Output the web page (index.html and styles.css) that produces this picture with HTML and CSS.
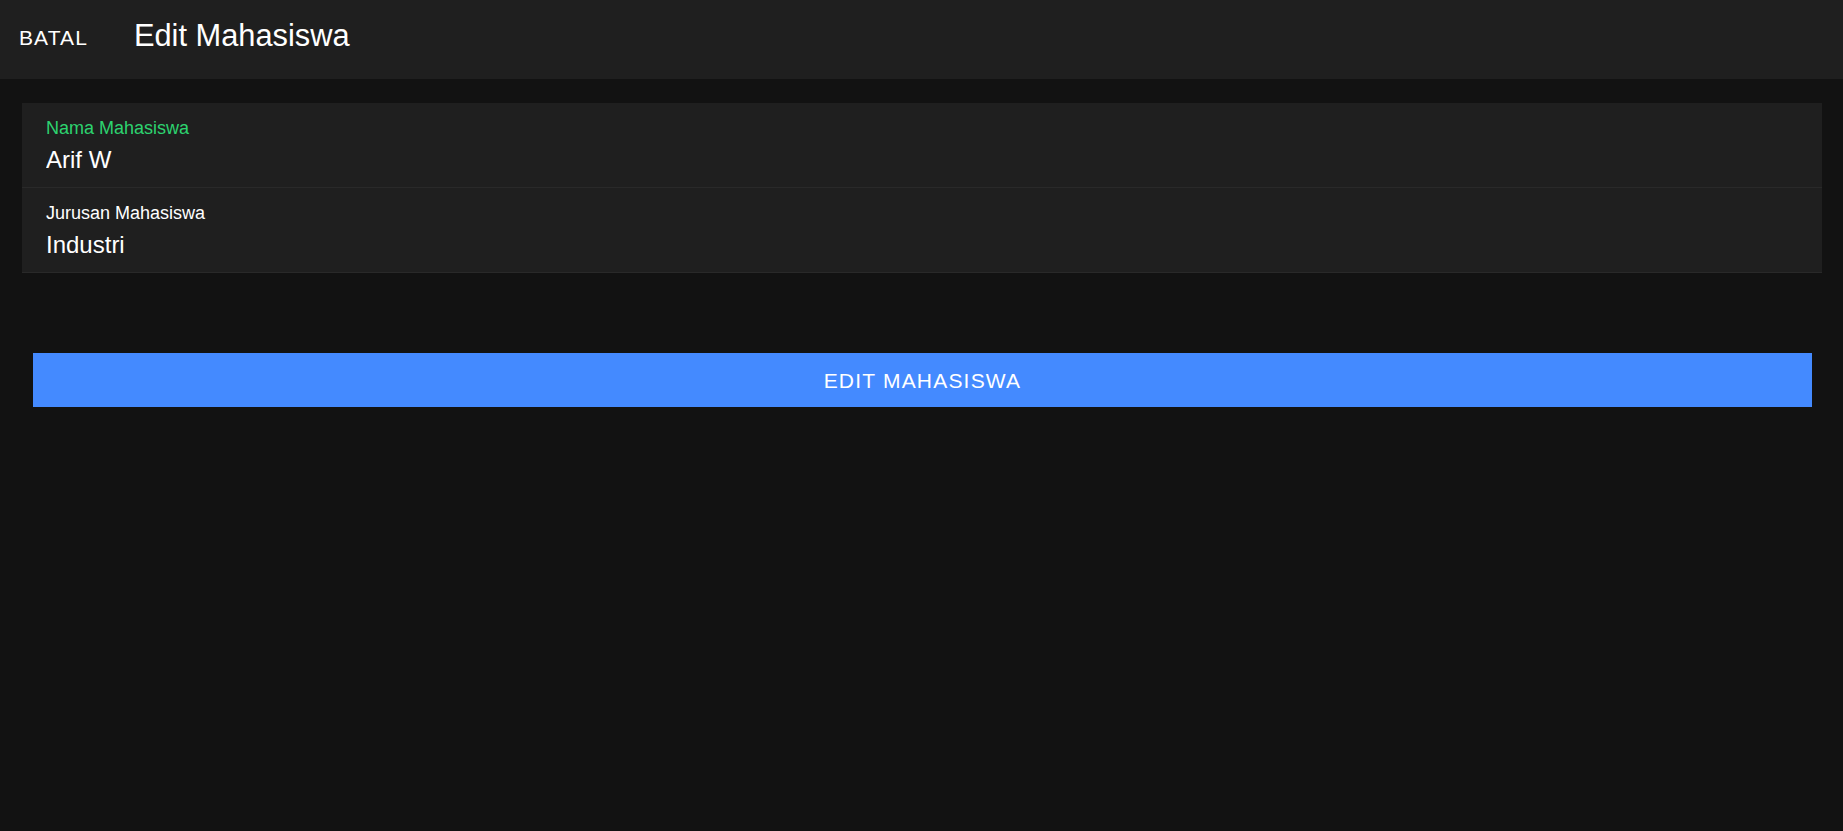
FILE: index.html
```html
<!DOCTYPE html>
<html lang="id">
<head>
<meta charset="utf-8">
<title>Edit Mahasiswa</title>
<link rel="stylesheet" href="styles.css">
</head>
<body>
<header class="toolbar">
  <button class="toolbar-btn" type="button">BATAL</button>
  <h1 class="toolbar-title">Edit Mahasiswa</h1>
</header>
<main class="content">
  <div class="list">
    <label class="item">
      <span class="item-label item-label--focused">Nama Mahasiswa</span>
      <input class="item-input" type="text" value="Arif W">
    </label>
    <label class="item">
      <span class="item-label">Jurusan Mahasiswa</span>
      <input class="item-input" type="text" value="Industri">
    </label>
  </div>
  <button class="submit-btn" type="button">EDIT MAHASISWA</button>
</main>
</body>
</html>
```

FILE: styles.css
```css
* { box-sizing: border-box; }
html, body {
  margin: 0;
  padding: 0;
  background: #121212;
  color: #ffffff;
  font-family: "Liberation Sans", Arial, sans-serif;
  min-height: 100vh;
}
.toolbar {
  height: 79px;
  background: #1f1f1f;
  display: flex;
  align-items: flex-start;
  padding-left: 19px;
}
.toolbar-btn {
  margin: 26px 0 0 0;
  padding: 0;
  border: 0;
  background: transparent;
  color: #ffffff;
  font-family: inherit;
  font-size: 21px;
  line-height: 24px;
  letter-spacing: 1.1px;
  cursor: pointer;
}
.toolbar-title {
  margin: 18px 0 0 46px;
  font-size: 30.8px;
  line-height: 36px;
  font-weight: 400;
}
.content {
  padding: 24px 21px 0 22px;
}
.list {
  background: #1f1f1f;
}
.item {
  display: flex;
  flex-direction: column;
  padding: 14px 24px 13px;
  border-bottom: 1px solid #292929;
}
.item-label {
  font-size: 18px;
  line-height: 22px;
  color: #ffffff;
}
.item-label--focused {
  color: #2dd36f;
}
.item-input {
  margin-top: 7px;
  padding: 0;
  border: 0;
  outline: none;
  background: transparent;
  color: #ffffff;
  font-family: inherit;
  font-size: 24px;
  line-height: 28px;
  height: 28px;
}
.submit-btn {
  display: block;
  width: calc(100% - 21px);
  margin: 80px 0 0 11px;
  height: 54px;
  padding: 16px 0 14px;
  border: 0;
  background: #448aff;
  color: #ffffff;
  font-family: inherit;
  font-size: 21px;
  line-height: 24px;
  letter-spacing: 1.2px;
  text-align: center;
  cursor: pointer;
}
```
